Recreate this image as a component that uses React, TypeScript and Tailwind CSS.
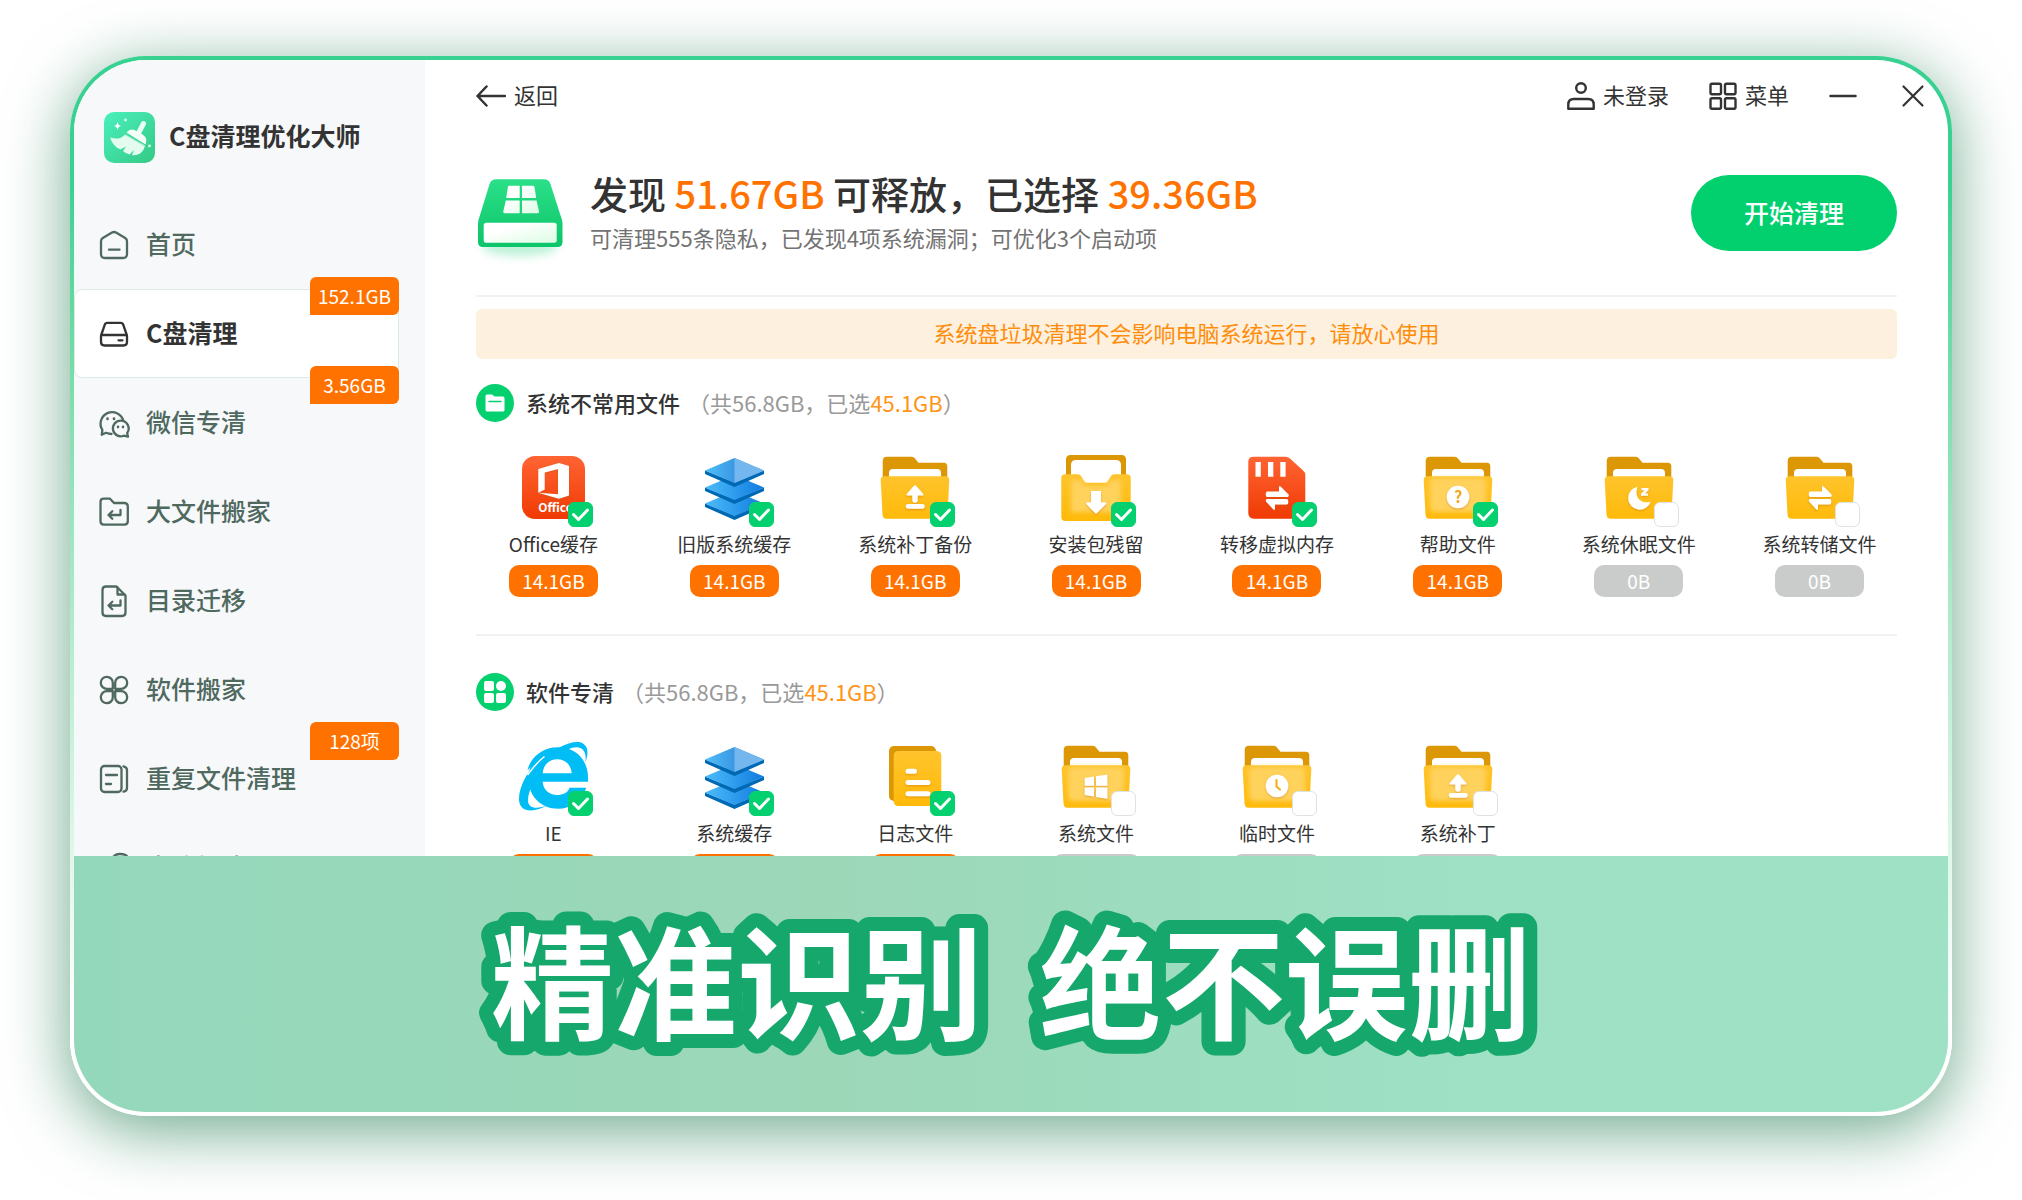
import type { ReactNode } from "react";

const NAV = [
    { label: "首页", icon: "home" },
    { label: "C盘清理", icon: "drive", badge: "152.1GB", active: true },
    { label: "微信专清", icon: "wechat", badge: "3.56GB" },
    { label: "大文件搬家", icon: "folder" },
    { label: "目录迁移", icon: "file" },
    { label: "软件搬家", icon: "clover" },
    { label: "重复文件清理", icon: "copy", badge: "128项" },
    { label: "电脑加速", icon: "rocket" },
];

const SECTIONS = [
    {
        title: "系统不常用文件",
        icon: "folder",
        items: [
            { label: "Office缓存", art: "office", size: "14.1GB", checked: true },
            { label: "旧版系统缓存", art: "layers", size: "14.1GB", checked: true },
            { label: "系统补丁备份", art: "upload", size: "14.1GB", checked: true },
            { label: "安装包残留", art: "package", size: "14.1GB", checked: true },
            { label: "转移虚拟内存", art: "sdcard", size: "14.1GB", checked: true },
            { label: "帮助文件", art: "help", size: "14.1GB", checked: true },
            { label: "系统休眠文件", art: "sleep", size: "0B", checked: false },
            { label: "系统转储文件", art: "swap", size: "0B", checked: false },
        ],
    },
    {
        title: "软件专清",
        icon: "apps",
        items: [
            { label: "IE", art: "ie", size: "14.1GB", checked: true },
            { label: "系统缓存", art: "layers", size: "14.1GB", checked: true },
            { label: "日志文件", art: "log", size: "14.1GB", checked: true },
            { label: "系统文件", art: "windows", size: "0B", checked: false },
            { label: "临时文件", art: "clock", size: "0B", checked: false },
            { label: "系统补丁", art: "uploadLight", size: "0B", checked: false },
        ],
    },
];

const NAV_ICONS: Record<string, ReactNode> = {
    home: (
        <path d="M13 2.6 3.8 8Q2 9.2 2 11.3V24q0 4 4 4h18q4 0 4-4V11.3Q28 9.2 26.2 8L17 2.6q-2-1.2-4 0ZM10 19.7h10.5" />
    ),
    drive: (
        <>
            <path d="M8.3 3.8h13.4q2 0 2.5 1.9l3.4 9.8q.4 1 .4 2V23q0 3.5-3.5 3.5h-19Q2 26.5 2 23v-5.5q0-1 .4-2l3.4-9.8q.5-1.9 2.5-1.9Z" />
            <path d="M2.5 16h25M19.5 21.3h4" />
        </>
    ),
    wechat: (
        <>
            <path d="M12.5 26Q10 26 7 24.8l-4.3 2 .7-4.8A11.6 11.6 0 1 1 24.3 12.5" />
            <path d="M21.7 12.7a7.8 7.8 0 1 0 3 15l4.3 1-.8-3.7a7.8 7.8 0 0 0-6.5-12.3Z" />
            <path d="M8.5 10.5v.5M15 10.5v.5M19 18.7v.4M24 18.7v.4" strokeWidth={2.6} />
        </>
    ),
    folder: (
        <>
            <path d="M1.5 5q0-3.3 3.3-3.3H11l4 4.3h10q3.8 0 3.8 3.5v14.8q0 3.3-3.3 3.3H4.8q-3.3 0-3.3-3.3Z" />
            <path d="M21.5 13v5h-12m3.8-3.7L9.5 18l3.8 3.7" />
        </>
    ),
    file: (
        <>
            <path d="M7 .5h10.500l9 9v17q0 3.500-3.500 3.500H7q-3.500 0-3.500-3.500V4Q3.500.5 7 .5Z" />
            <path d="M18.500 1.500v7h7" />
            <path d="M21.500 14.500v5h-12m3.800-3.700-3.800 3.700 3.800 3.700" />
        </>
    ),
    clover: (
        <>
            <path d="M13.8 13.8H8A6 6 0 1 1 13.8 8Z" />
            <path d="M16.2 13.8H22A6 6 0 1 0 16.2 8Z" />
            <path d="M13.8 16.2H8A6 6 0 1 0 13.8 22Z" />
            <path d="M16.2 16.2H22A6 6 0 1 1 16.2 22Z" />
        </>
    ),
    copy: (
        <>
            <rect x="2" y="2" width="20.5" height="26" rx="3.5" />
            <path d="M7 11h11M7 20h5M24.5 2.3Q28 3 28 6v18q0 3-3.5 3.7" />
        </>
    ),
    rocket: (
        <>
            <path d="M10 17C10 8 14 1 21 1q6 0 7.5 3 .5 10-9.5 17l-9-4Z" />
            <path d="m10 12-7 4 6 2m8 5 1 5 5-8" />
        </>
    ),
};

function NavIcon({ name }: { name: string }) {
    return (
        <svg
            viewBox="0 0 30 30"
            className="size-[30px] shrink-0 overflow-visible"
            fill="none"
            stroke="currentColor"
            strokeWidth={2.3}
            strokeLinecap="round"
            strokeLinejoin="round"
        >
            {NAV_ICONS[name]}
        </svg>
    );
}

function Logo() {
    return (
        <svg viewBox="0 0 51 51" className="size-[51px] shrink-0">
            <rect width="51" height="51" rx="10" fill="url(#logoBg)" />
            <path d="M39.5 11.5 33.5 23" stroke="#eafff5" strokeWidth="5" strokeLinecap="round" />
            <path d="M22.5 20.5q3.5-4.5 8-2.5l8 4.5q5 3 3.5 8l-.5 2Z" fill="#f4fff9" />
            <path
                d="M21 22.5C17 27 12 27.5 6 25.5c2 6 5.5 10 10.5 12l5.5-3-3 4.8q3.5 2.5 6.5 3.2l4.5-4.5-2 5q4.5.8 8-1.5 4-3 5-8Z"
                fill="#e4fcf0"
            />
            <path d="m21.5 22.8 19.7 11.5" stroke="#9fe8c6" strokeWidth="1" />
            <path d="M13.5 9.5q.5 4 3.5 4.5-3 .5-3.5 4-.5-3.5-3.5-4 3-.5 3.5-4.5Z" fill="#fff" />
            <circle cx="21.5" cy="8" r="1.4" fill="#d8fff0" />
            <circle cx="45.5" cy="34" r="1.4" fill="#d8fff0" />
        </svg>
    );
}

function DiskArt() {
    return (
        <svg viewBox="0 0 88 76" className="h-[76px] w-[88px] shrink-0 overflow-visible">
            <ellipse cx="44" cy="72" rx="38" ry="9" fill="#8fe8bd" opacity="0.6" filter="url(#soft)" />
            <path
                d="M20 4.3h48q5 0 6.5 5L86 45q.5 2 .5 4v18q0 5-5 5H7q-5 0-5-5V49q0-2 .5-4L13.5 9.3q1.5-5 6.5-5Z"
                fill="url(#diskBody)"
            />
            <path
                d="M33 10.7h10.7V23H30.2l1.6-10.5q.2-1.8 1.2-1.8ZM46 10.7h11.3q1 0 1.3 1.8L60.2 23H46ZM29.8 25.500h13.900v12.800H29q-2 0-1.700-2ZM46 25.500h14.600L63 36.300q.3 2-1.700 2H46Z"
                fill="url(#pane)"
            />
            <rect x="7.7" y="47.7" width="73" height="20" rx="2.5" fill="url(#pane)" />
        </svg>
    );
}

function Folder({ light = false, children }: { light?: boolean; children: ReactNode }) {
    return (
        <>
            <path d="M3.7 9q0-4.3 4.3-4.3h24.5q1.7 0 3 1.3l4 4.700H65q3.300 0 3.300 3.500V32H3.700Z" fill="#db9706" />
            <path d="M10 21q0-4 4-4h44q4 0 4 4v8H10Z" fill="#fff" />
            <path
                d="M1.7 28q0-3.7 3.8-3.7h61q3.8 0 3.8 3.7l-1.8 34.500q-.3 4.200-4 4.200h-57q-3.700 0-4-4.200Z"
                fill="url(#front)"
            />
            {light && <rect x="8" y="26" width="56" height="34" rx="5" fill="#ffd25c" filter="url(#glow)" />}
            <g fill="#fff" filter="url(#lift)">
                {children}
            </g>
        </>
    );
}

const UPLOAD = (
    <path d="M34.7 34q1.3-1.4 2.6 0l7 8q.8 1.5-1 1.5h-4.6v5.2q0 2-2.7 2t-2.7-2v-5.2h-4.6q-1.8 0-1-1.5ZM29 52h14.5q2.3 0 2.3 2.3t-2.3 2.4H29q-2.3 0-2.3-2.4T29 52Z" />
);

const SWAP = (
    <path d="M26 39.5h12V35q.4-1.5 1.6-.5l8 8q.6 2-1 2.5H26q-1.3-.3-1.3-2.7t1.3-2.8ZM46 52.500H34V57q-.4 1.500-1.600.5l-7.400-8q-.6-2 1-2.500h20q1.300.3 1.300 2.700T46 52.500Z" />
);

const LAYER_TOPS = [51.5, 35.5, 18.5];

const ART: Record<string, ReactNode> = {
    office: (
        <>
            <rect x="5" y="4" width="63" height="63" rx="13" fill="url(#red)" />
            <path
                d="m21.3 17 20.7-6 10 3v29.5l-10 3.2-20.7-6 19.7 1.6V17l-13.3 3.5v17l-6.4 3.200Z"
                fill="#fff"
                filter="url(#lift)"
            />
            <text x="38.5" y="60" textAnchor="middle" fontSize="12" fontWeight="700" fill="#fff">
                Office
            </text>
        </>
    ),
    layers: (
        <>
            {LAYER_TOPS.map((y, i) => (
                <g key={y} transform={`translate(0 ${y})`}>
                    <path d="M7 0v3.5l29.500 13L66 3.500V0L36.500 12Z" fill="#0069b3" />
                    <path d="M36.5-12.5 7 0l29.500 12.500L66 0Z" fill={i === 2 ? "url(#blueTop)" : "url(#blue)"} />
                    {i === 2 && <path d="M36.5-12.5v25L66 0Z" fill="#74b7ef" />}
                </g>
            ))}
        </>
    ),
    upload: <Folder>{UPLOAD}</Folder>,
    uploadLight: <Folder light>{UPLOAD}</Folder>,
    package: (
        <>
            <path d="M6 7.5Q6 3 10.5 3h51Q66 3 66 7.5V40H6Z" fill="#db9706" />
            <path d="M11 13q0-5 5-5h40q5 0 5 5v25H11Z" fill="#fff" />
            <path
                d="M1.3 26q0-3.7 3.7-3.7h13q2 0 3 1.7l3.2 5.2q.8 1.5 2.5 1.5h18.6q1.7 0 2.5-1.5L51 24q1-1.7 3-1.7h13q3.7 0 3.7 3.7v39q0 4-4 4H5.3q-4 0-4-4Z"
                fill="url(#front)"
            />
            <path d="M11 28h10l5 6h20l5-6h10v32H11Z" fill="#ffd25c" filter="url(#glow)" />
            <path
                d="M31 39h10v11.3h4.3q1.5.5.5 2L37 61q-1 1-2 0l-8.5-8.7q-1-1.5.5-2h4Z"
                fill="#fff"
                filter="url(#lift)"
            />
        </>
    ),
    sdcard: (
        <>
            <path
                d="M12.5 4.7h32q2.5 0 4.5 1.8l12.8 11.7q2.5 2 2.5 5V61q0 5.7-5.7 5.7H13q-5.7 0-5.7-5.7V10q0-5.3 5.2-5.3Z"
                fill="url(#red)"
            />
            <path d="M14.5 10h5.3v14.7h-5.3ZM27 10h5.3v14.7H27ZM39.3 10h5.3v14.7h-5.3Z" fill="#fff" />
            <g fill="#fff" filter="url(#lift)">
                {SWAP}
            </g>
        </>
    ),
    help: (
        <Folder light>
            <circle cx="36" cy="45" r="11.3" />
            <text x="36" y="51" textAnchor="middle" fontSize="16" fontWeight="700" fill="#efa81c">
                ?
            </text>
        </Folder>
    ),
    sleep: (
        <Folder>
            <path d="M34.5 34.7a11.6 11.6 0 1 0 13.3 14.8C41.5 52.5 30 47.5 34.5 34.7Z" />
            <path d="M38.5 36h7v2L42 41.5h3v2.3h-7v-2l3.7-3.5h-3.2Z" />
        </Folder>
    ),
    swap: <Folder>{SWAP}</Folder>,
    windows: (
        <Folder light>
            <path d="m24.7 37 9.3-1.5v9.2h-9.3ZM36 35.2l11.4-1.7v11.2H36ZM24.7 46.5H34v9L24.7 54ZM36 46.5h11.4v11.2L36 55.9Z" />
        </Folder>
    ),
    clock: (
        <Folder light>
            <circle cx="36" cy="45" r="11.3" />
            <path d="M35.5 39v6.5l3.5 3" fill="none" stroke="#f5b21c" strokeWidth="2.2" strokeLinecap="round" />
        </Folder>
    ),
    ie: (
        <g fill="#00bdf5">
            <path
                fillRule="evenodd"
                d="M71 40.7H25.7C26 48 32 54 40 54c6 0 11-2.5 12.5-7.3h16.7C65.5 60 54 67.7 41 67.7c-17 0-29.5-12.5-29.5-30S24 6.3 41 6.3c19 0 31.5 14 30 34.4ZM25.7 32.3h29c-.5-8.5-6.5-14-14.5-14s-14 5.5-14.5 14Z"
            />
            <path d="M28 18.5c-8 3.5-14 6.5-17.5 11C13 18 22 9 36 6.5Z" />
            <path d="M27 14C12 26 2 45 2 58c0 14 15 14 29 6-11 4.5-20 4-20-5 0-5 2-11 6-18l10-15Z" />
            <path d="M42 6.5c10-5 19-7 24-4 6 3.5 5 11 2.5 19.5 1-8.5-1-14.5-7-15.500-4-.7-8 .8-12 2.500Z" />
            <path d="M27.5 15.5C20 21 15 28 10.5 34" fill="none" stroke="#fff" strokeWidth="1.5" />
        </g>
    ),
    log: (
        <>
            <rect x="10" y="5" width="47" height="55" rx="5" fill="#db9706" />
            <rect x="14.7" y="10" width="47.6" height="55" rx="4.5" fill="url(#front)" />
            <g stroke="#fff" strokeWidth="5" strokeLinecap="round" filter="url(#lift)">
                <path d="M29 30.3h6.500M29 41.500h20M29 52.700h20" />
            </g>
        </>
    ),
};

// Gradients and filters shared by all drawings on the page
function SharedDefs() {
    return (
        <svg className="absolute size-0" aria-hidden="true">
            <defs>
                <linearGradient id="logoBg" x1="0" y1="0" x2="1" y2="1">
                    <stop stopColor="#49f0bd" />
                    <stop offset="1" stopColor="#35c985" />
                </linearGradient>
                <linearGradient id="diskBody" x1="0" y1="0" x2="0" y2="1">
                    <stop stopColor="#2be088" />
                    <stop offset="1" stopColor="#0cc46a" />
                </linearGradient>
                <linearGradient id="pane" x1="0" y1="0" x2="1" y2="1">
                    <stop offset="0.3" stopColor="#fff" />
                    <stop offset="1" stopColor="#dcfce4" />
                </linearGradient>
                <linearGradient id="front" x1="0" y1="0" x2="0" y2="1">
                    <stop stopColor="#ffc42c" />
                    <stop offset="1" stopColor="#ffba0a" />
                </linearGradient>
                <linearGradient id="red" x1="0" y1="0" x2="0" y2="1">
                    <stop stopColor="#ff6433" />
                    <stop offset="1" stopColor="#f03a04" />
                </linearGradient>
                <linearGradient id="blue">
                    <stop stopColor="#4dbcfa" />
                    <stop offset="1" stopColor="#0f7be0" />
                </linearGradient>
                <linearGradient id="blueTop">
                    <stop stopColor="#4fbffb" />
                    <stop offset="0.5" stopColor="#3a97e2" />
                </linearGradient>
                <filter id="soft" x="-30%" y="-100%" width="160%" height="300%">
                    <feGaussianBlur stdDeviation="5" />
                </filter>
                <filter id="glow">
                    <feGaussianBlur stdDeviation="2" />
                </filter>
                <filter id="lift" x="-30%" y="-30%" width="160%" height="160%">
                    <feDropShadow dx="0" dy="1" stdDeviation="1" floodColor="#b45309" floodOpacity="0.4" />
                </filter>
            </defs>
        </svg>
    );
}

function Sidebar() {
    return (
        <aside className="w-[351px] shrink-0 bg-[#f7f8fa] pt-[51px]">
            <div className="flex h-[52px] items-center gap-3.5 pl-[30px]">
                <Logo />
                <h1 className="pb-0.5 text-[25px] font-bold whitespace-nowrap text-[#333]">C盘清理优化大师</h1>
            </div>
            <nav className="mt-[37px] pr-[26px]">
                {NAV.map((item) => (
                    <a
                        key={item.label}
                        href="#"
                        className={`relative flex h-[89px] items-center gap-[17px] rounded-lg border pl-6 text-[25px] ${
                            item.active
                                ? "border-[#dcebe6] bg-white font-bold text-[#333]"
                                : "border-transparent font-medium text-[#4f695f]"
                        }`}
                    >
                        <NavIcon name={item.icon} />
                        <span className="pb-0.5">{item.label}</span>
                        {item.badge && (
                            <span className="absolute -top-[13px] -right-px z-10 flex h-[38px] w-[89px] items-center justify-center rounded-md rounded-bl-none bg-[#ff7200] text-[19px] font-normal text-white">
                                {item.badge}
                            </span>
                        )}
                    </a>
                ))}
            </nav>
        </aside>
    );
}

function TopBar() {
    return (
        <header className="flex h-7 items-center justify-between pr-[25px] pl-[51px] text-[22px] text-[#333]">
            <button className="flex items-center gap-2">
                <svg
                    viewBox="0 0 30 22"
                    className="h-[22px] w-[30px]"
                    fill="none"
                    stroke="currentColor"
                    strokeWidth={2.5}
                    strokeLinecap="round"
                    strokeLinejoin="round"
                >
                    <path d="m10.5 1.5-9 9.500 9 9.500M1.500 11h27.500" />
                </svg>
                <span className="pb-1">返回</span>
            </button>
            <div className="flex items-center">
                <button className="flex items-center gap-2">
                    <svg
                        viewBox="0 0 28 28"
                        className="size-7"
                        fill="none"
                        stroke="currentColor"
                        strokeWidth={2.4}
                        strokeLinejoin="round"
                    >
                        <circle cx="14" cy="6" r="4.8" />
                        <path d="M1.3 26.8v-4.300q0-5.500 5.500-5.500h14.400q5.500 0 5.500 5.500v4.300Z" />
                    </svg>
                    <span className="pb-1">未登录</span>
                </button>
                <button className="ml-10 flex items-center gap-2">
                    <svg viewBox="0 0 28 28" className="size-7" fill="none" stroke="currentColor" strokeWidth={2.4}>
                        <rect x="1.5" y="1.8" width="10.5" height="10.5" rx="1.5" />
                        <rect x="16" y="1.8" width="10.5" height="10.5" rx="1.5" />
                        <rect x="1.5" y="16.2" width="10.5" height="10.5" rx="1.5" />
                        <rect x="16" y="16.2" width="10.5" height="10.5" rx="1.5" />
                    </svg>
                    <span className="pb-1">菜单</span>
                </button>
                <button aria-label="最小化" className="ml-10">
                    <svg viewBox="0 0 28 28" className="size-7" stroke="currentColor" strokeWidth={2.5} strokeLinecap="round">
                        <path d="M1.5 14h25" />
                    </svg>
                </button>
                <button aria-label="关闭" className="ml-[46px]">
                    <svg
                        viewBox="0 0 20 20"
                        className="size-5 overflow-visible"
                        stroke="currentColor"
                        strokeWidth={2.2}
                        strokeLinecap="round"
                    >
                        <path d="m.5.5 19 19M19.5.5l-19 19" />
                    </svg>
                </button>
            </div>
        </header>
    );
}

function SectionIcon({ name }: { name: string }) {
    return (
        <span className="flex size-[38px] items-center justify-center rounded-full bg-[#04d06f]">
            {name === "folder" ? (
                <svg viewBox="0 0 20 18" className="h-[18px] w-5">
                    <path d="M.5 2Q.5.5 2 .5h5l2.500 2H18q1.500 0 1.500 1.500v12q0 1.500-1.500 1.500H2Q.5 17.500.5 16Z" fill="#fff" />
                    <path d="M4 7.5h12" stroke="#04d06f" strokeWidth="1.5" strokeLinecap="round" />
                </svg>
            ) : (
                <svg viewBox="0 0 22 22" className="size-[22px]" fill="#fff">
                    <rect width="10" height="10" rx="2" />
                    <circle cx="17" cy="5" r="5" />
                    <rect y="12" width="10" height="10" rx="2" />
                    <rect x="12" y="12" width="10" height="10" rx="2" />
                </svg>
            )}
        </span>
    );
}

type Item = (typeof SECTIONS)[number]["items"][number];

function CleanItem({ item }: { item: Item }) {
    return (
        <label className="flex flex-col items-center text-[19px] whitespace-nowrap">
            <span className="relative size-[72px]">
                <svg viewBox="0 0 72 72" className="size-[72px]">
                    {ART[item.art]}
                </svg>
                <input
                    type="checkbox"
                    defaultChecked={item.checked}
                    className="peer absolute -right-1 -bottom-[3px] size-[25px] appearance-none rounded-md border border-[#dfe2e2] bg-white checked:border-[#04d06f] checked:bg-[#04d06f]"
                />
                <svg
                    viewBox="0 0 25 25"
                    className="pointer-events-none absolute -right-1 -bottom-[3px] hidden size-[25px] peer-checked:block"
                    fill="none"
                    stroke="#fff"
                    strokeWidth={3}
                    strokeLinecap="round"
                    strokeLinejoin="round"
                >
                    <path d="m5.5 12.5 5 5 9-9.5" />
                </svg>
            </span>
            <span className="mt-1.5 leading-7 text-[#333]">{item.label}</span>
            <span
                className={`mt-[7px] flex h-8 w-[89px] items-center justify-center rounded-[10px] text-white ${
                    item.checked ? "bg-[#ff7200]" : "bg-[#cacccb]"
                }`}
            >
                {item.size}
            </span>
        </label>
    );
}

export default function App() {
    return (
        <div className="flex min-h-screen flex-col bg-white px-[70px] pt-14 pb-[84px] font-['Noto_Sans_CJK_SC',sans-serif]">
            <SharedDefs />
            <div className="flex flex-1 rounded-[76px] bg-linear-to-b from-[#38d192] from-12% to-white to-90% p-1 shadow-[0_14px_64px_rgba(18,114,69,0.62)]">
                <div className="relative flex flex-1 overflow-hidden rounded-[72px] bg-white">
                    <Sidebar />
                    <main className="min-w-0 flex-1 pt-[22px]">
                        <TopBar />
                        <div className="px-[51px]">
                            <div className="mt-[65px] flex items-center">
                                <DiskArt />
                                <div className="ml-[26px] flex-1">
                                    <h2 className="text-[38px] leading-9 font-medium text-[#333]">
                                        发现 <span className="text-[#ff7200]">51.67GB</span> 可释放，已选择{" "}
                                        <span className="text-[#ff7200]">39.36GB</span>
                                    </h2>
                                    <p className="mt-3 text-[22px] leading-7 text-[#737373]">
                                        可清理555条隐私，已发现4项系统漏洞；可优化3个启动项
                                    </p>
                                </div>
                                <button className="h-[76px] w-[206px] rounded-full bg-[#02d06f] text-[25px] font-medium text-white">
                                    开始清理
                                </button>
                            </div>
                            <hr className="mt-11 border-t-2 border-[#f1f1f1]" />
                            <p className="mt-3 flex h-[50px] items-center justify-center rounded-md bg-[#fdf0de] pb-1 text-[22px] text-[#ff8d0c]">
                                系统盘垃圾清理不会影响电脑系统运行，请放心使用
                            </p>
                            {SECTIONS.map((section, i) => (
                                <section
                                    key={section.title}
                                    className={i === 0 ? "mt-[25px]" : "mt-[37px] border-t-2 border-[#f1f1f1] pt-[37px]"}
                                >
                                    <div className="flex h-[38px] items-center text-[22px]">
                                        <SectionIcon name={section.icon} />
                                        <h3 className="ml-3 pb-0.5 font-medium text-[#333]">{section.title}</h3>
                                        <p className="ml-2 pb-0.5 text-[#999]">
                                            （共56.8GB，已选<span className="text-[#ff9417]">45.1GB</span>）
                                        </p>
                                    </div>
                                    <div className="mt-[30px] grid grid-cols-8 gap-x-[26px]">
                                        {section.items.map((item) => (
                                            <CleanItem key={item.label} item={item} />
                                        ))}
                                    </div>
                                </section>
                            ))}
                        </div>
                    </main>
                    {/* Slogan banner over the bottom of the window */}
                    <div className="absolute inset-x-0 bottom-0 z-20 h-64 bg-linear-to-r from-[#94d8bb] via-[#9cd7b8] via-40% to-[#9ee1c5] to-75%">
                        <svg className="h-64 w-full">
                            <text
                                x="50%"
                                y="174"
                                textAnchor="middle"
                                fontSize="123"
                                fontWeight="700"
                                fill="#fff"
                                stroke="#15a76c"
                                strokeWidth="28"
                                strokeLinejoin="round"
                                className="whitespace-pre [paint-order:stroke]"
                            >
                                {"精准识别  绝不误删"}
                            </text>
                        </svg>
                    </div>
                </div>
            </div>
        </div>
    );
}
